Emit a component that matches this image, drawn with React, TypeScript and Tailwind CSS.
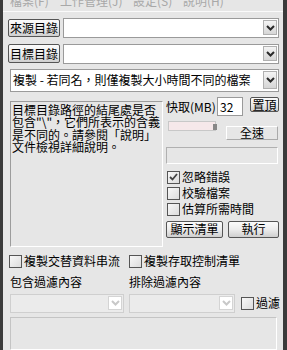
import type { ReactNode } from "react";

const font = { fontFamily: '"Noto Sans CJK TC", "Noto Sans", sans-serif' };

function Btn({ children, className = "" }: { children: ReactNode; className?: string }) {
  return (
    <div
      className={`flex items-center justify-center whitespace-nowrap border border-[#555] rounded-[2px] bg-linear-to-b from-[#fbfbfb] via-[#ececec] to-[#cfcfcf] text-[12px] text-black leading-none ${className}`}
    >
      {children}
    </div>
  );
}

function Chevron({ color = "#333" }: { color?: string }) {
  return (
    <svg width="9" height="6" viewBox="0 0 9 6">
      <polyline points="1,1 4.5,4.5 8,1" fill="none" stroke={color} strokeWidth="2" />
    </svg>
  );
}

function Combo({ className = "", text, disabled }: { className?: string; text?: string; disabled?: boolean }) {
  return (
    <div
      className={`flex items-center border ${disabled ? "border-[#cfcfcf] bg-[#ebebeb]" : "border-[#9a9a9a] bg-white"} ${className}`}
    >
      <div className="flex-1 pl-[2px] text-[12px] leading-none text-black whitespace-nowrap overflow-hidden">{text}</div>
      <div
        className={`mr-[1px] flex h-[calc(100%-3px)] w-[14px] items-center justify-center ${
          disabled ? "border border-[#d4d4d4] bg-white" : "border border-[#b0b0b0] bg-linear-to-b from-[#f4f4f4] to-[#d6d6d6]"
        }`}
      >
        <Chevron color={disabled ? "#c8c8c8" : "#2a2a2a"} />
      </div>
    </div>
  );
}

function Check({ label, checked }: { label: string; checked?: boolean }) {
  return (
    <div className="flex items-center gap-[2px] whitespace-nowrap text-[12px] leading-none text-black">
      <div className="flex h-[13px] w-[13px] items-center justify-center border border-[#555] bg-linear-to-br from-[#f8f8f8] to-[#dcdcdc]">
        {checked && (
          <svg width="9" height="8" viewBox="0 0 9 8">
            <polyline points="1,4 3.5,6.5 8,1" fill="none" stroke="#444" strokeWidth="1.8" />
          </svg>
        )}
      </div>
      <span>{label}</span>
    </div>
  );
}

export default function App() {
  return (
    <div
      className="flex h-[350px] w-[287px] flex-col overflow-hidden border-l-[3px] border-r-[4px] border-[#3a3a3a] bg-[#e6e6e6]"
      style={font}
    >
      <div className="h-[14px] overflow-hidden border-b border-[#fafafa]">
        <div className="-mt-[5px] flex pl-[7px] text-[12px] leading-[12px] text-[#a8a8a8]">
          <span className="w-[50px]">檔案(F)</span>
          <span className="w-[73px]">工作管理(J)</span>
          <span className="w-[50px]">設定(S)</span>
          <span>說明(H)</span>
        </div>
      </div>

      <div className="mt-[6px] flex items-center pl-[5px]">
        <Btn className="h-[18px] w-[52px]">來源目錄</Btn>
        <Combo className="ml-[3px] h-[20px] w-[216px]" />
      </div>
      <div className="mt-[6px] flex items-center pl-[5px]">
        <Btn className="h-[19px] w-[52px]">目標目錄</Btn>
        <Combo className="ml-[3px] h-[20px] w-[216px]" />
      </div>
      <div className="mt-[5px] pl-[7px]">
        <Combo className="h-[23px] w-[269px]" text="複製 - 若同名，則僅複製大小時間不同的檔案" />
      </div>

      <div className="mt-[5px] flex pl-[7px]">
        <div className="mt-[4px] h-[146px] w-[153px] border-t border-l border-[#9c9c9c] border-r border-b border-r-white border-b-white px-[1px] pt-[2px] text-[12px] leading-[12.5px] text-black">
          目標目錄路徑的結尾處是否包含"\"，它們所表示的含義是不同的。請參閱「說明」文件檢視詳細說明。
        </div>
        <div className="ml-[3px] flex w-[113px] flex-col">
          <div className="flex items-center">
            <span className="mt-[2px] w-[51px] whitespace-nowrap text-[12px] leading-none text-black">快取(MB)</span>
            <div className="h-[19px] w-[26px] border border-[#9a9a9a] bg-white pl-[2px] text-[12px] leading-[17px] text-black">
              32
            </div>
            <Btn className="-mt-[3px] ml-[7px] h-[15px] w-[29px]">置頂</Btn>
          </div>
          <div className="mt-[5px] flex">
            <div className="ml-[2px] flex h-[10px] w-[48px] items-end border border-[#c8c8c8] bg-[#f6e8ea]">
              <div className="ml-auto mr-[-2px] h-[6px] w-[4px] bg-[#888]" />
            </div>
            <div className="ml-[10px] mt-[5px] flex h-[14px] w-[52px] items-center justify-center border border-t-white border-l-white border-r-[#aaa] border-b-[#aaa] text-[12px] leading-none text-black">
              全速
            </div>
          </div>
          <div className="mt-[7px] h-[17px] w-[112px] border border-t-[#b0b0b0] border-l-[#b0b0b0] border-r-white border-b-white" />
          <div className="mt-[7px] flex flex-col gap-[3px] pl-[1px]">
            <Check label="忽略錯誤" checked />
            <Check label="校驗檔案" />
            <Check label="估算所需時間" />
          </div>
          <div className="mt-[5px] flex">
            <Btn className="h-[17px] w-[57px]">顯示清單</Btn>
            <Btn className="ml-[5px] h-[17px] w-[51px]">執行</Btn>
          </div>
        </div>
      </div>

      <div className="mt-[8px] flex pl-[6px]">
        <div className="w-[120px]">
          <Check label="複製交替資料串流" />
        </div>
        <Check label="複製存取控制清單" />
      </div>
      <div className="mt-[8px] flex pl-[7px] text-[12px] leading-none text-black">
        <span className="w-[119px]">包含過濾內容</span>
        <span>排除過濾內容</span>
      </div>
      <div className="mt-[6px] flex items-center pl-[7px]">
        <Combo disabled className="h-[19px] w-[114px]" />
        <Combo disabled className="ml-[5px] h-[19px] w-[106px]" />
        <div className="ml-[6px]">
          <Check label="過濾" />
        </div>
      </div>
      <div className="mt-[4px] ml-[7px] h-[40px] w-[267px] border border-t-[#c4c4c4] border-l-[#c4c4c4] border-r-white border-b-white" />
    </div>
  );
}
